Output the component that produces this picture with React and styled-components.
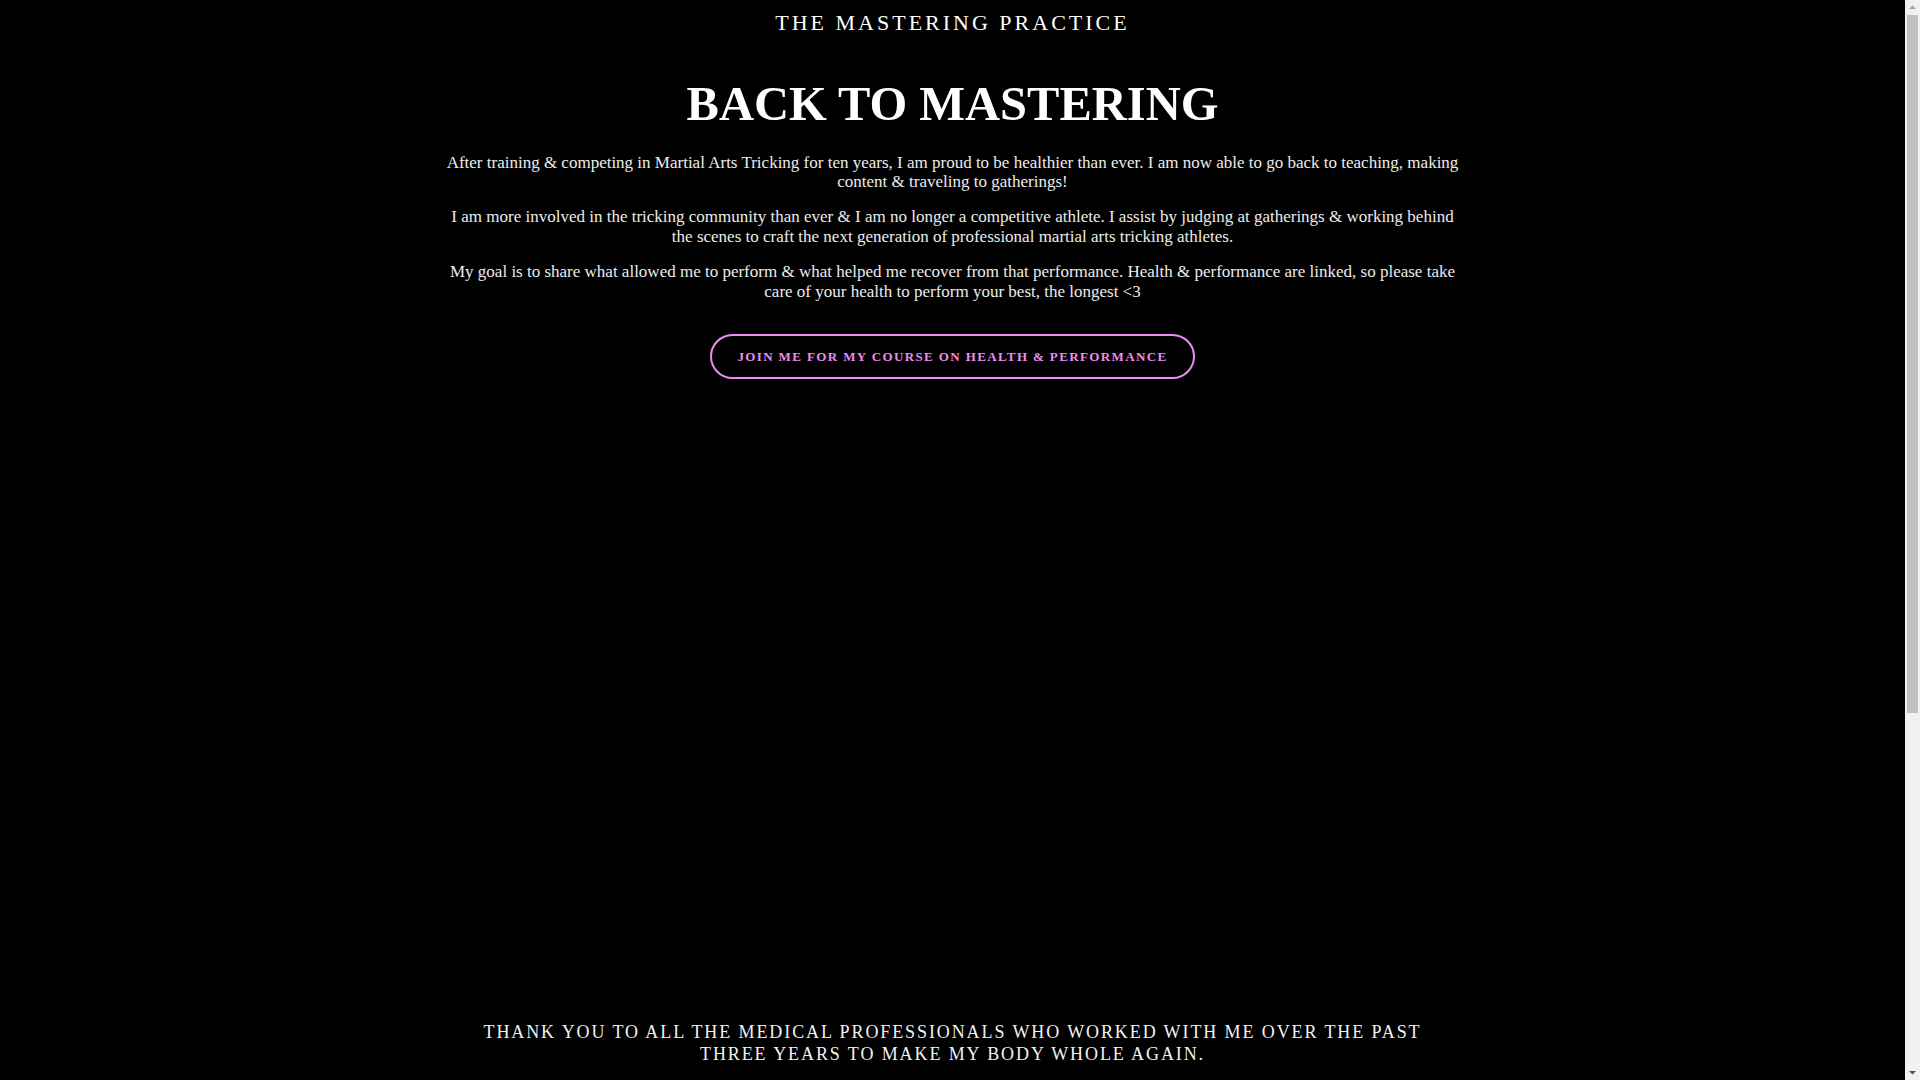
import React from 'react'
import styled, { createGlobalStyle } from 'styled-components'

const GlobalStyle = createGlobalStyle`
  html, body {
    margin: 0;
    padding: 0;
    background: #000000;
  }
  body {
    font-family: "Liberation Serif", "Times New Roman", serif;
    color: #ffffff;
  }
`

const Page = styled.div`
  display: flex;
  flex-direction: column;
  align-items: center;
  text-align: center;
  background: #000000;
  padding-top: 10px;
  margin-right: 15px;
`

const SiteTitle = styled.div`
  font-size: 22px;
  line-height: 25px;
  letter-spacing: 3px;
  color: #ffffff;
  text-transform: uppercase;
`

const Heading = styled.h1`
  margin: 40px 0 0;
  font-size: 48.5px;
  line-height: 57.6px;
  font-weight: bold;
  color: #ffffff;
`

const Intro = styled.div`
  width: 1020px;
  margin-top: 20px;
`

const Paragraph = styled.p`
  margin: 0 0 15.6px;
  font-size: 17px;
  line-height: 19.6px;
  color: #ececec;

  &:last-child {
    margin-bottom: 0;
  }
`

const CourseButton = styled.a`
  display: inline-block;
  margin-top: 33px;
  padding: 13px 25px;
  border: 2px solid #ee8cee;
  border-radius: 30px;
  font-size: 13px;
  line-height: 15px;
  font-weight: bold;
  letter-spacing: 1.38px;
  color: #ee8cee;
  text-decoration: none;
  text-transform: uppercase;
  cursor: pointer;
`

const VideoFrame = styled.div`
  width: 1020px;
  height: 562px;
  margin: 40px 0;
  background: #000000;
`

const Thanks = styled.div`
  width: 980px;
  font-size: 18px;
  line-height: 22px;
  letter-spacing: 1.9px;
  color: #f2f2f2;
  text-transform: uppercase;
`

const Spacer = styled.div`
  height: 561px;
`

const ScrollTrack = styled.div`
  position: fixed;
  top: 0;
  right: 0;
  width: 15px;
  height: 100vh;
  background: #f1f1f1;
`

const ScrollThumb = styled.div`
  position: absolute;
  top: 15px;
  left: 2px;
  width: 11px;
  height: 698px;
  background: #c1c1c1;
`

const ScrollArrow = styled.svg`
  position: absolute;
  left: 0;
  width: 15px;
  height: 15px;
  ${(p) => (p.$bottom ? 'bottom: 0;' : 'top: 0;')}
`

const paragraphs = [
  'After training & competing in Martial Arts Tricking for ten years, I am proud to be healthier than ever. I am now able to go back to teaching, making content & traveling to gatherings!',
  'I am more involved in the tricking community than ever & I am no longer a competitive athlete. I assist by judging at gatherings & working behind the scenes to craft the next generation of professional martial arts tricking athletes.',
  'My goal is to share what allowed me to perform & what helped me recover from that performance. Health & performance are linked, so please take care of your health to perform your best, the longest <3',
]

const App = () => {
  return (
    <>
      <GlobalStyle />
      <Page>
        <SiteTitle>The Mastering Practice</SiteTitle>
        <Heading>BACK TO MASTERING</Heading>
        <Intro>
          {paragraphs.map((text, i) => (
            <Paragraph key={i}>{text}</Paragraph>
          ))}
        </Intro>
        <CourseButton>Join me for my course on health &amp; performance</CourseButton>
        <VideoFrame />
        <Thanks>
          Thank you to all the medical professionals who worked with me over the past three years to make my body whole again.
        </Thanks>
        <Spacer />
      </Page>
      <ScrollTrack>
        <ScrollArrow viewBox="0 0 15 15">
          <path d="M4 9 L7.5 5.5 L11 9 Z" fill="#a3a3a3" />
        </ScrollArrow>
        <ScrollThumb />
        <ScrollArrow $bottom viewBox="0 0 15 15">
          <path d="M4 6 L7.5 9.5 L11 6 Z" fill="#505050" />
        </ScrollArrow>
      </ScrollTrack>
    </>
  )
}

export default App
